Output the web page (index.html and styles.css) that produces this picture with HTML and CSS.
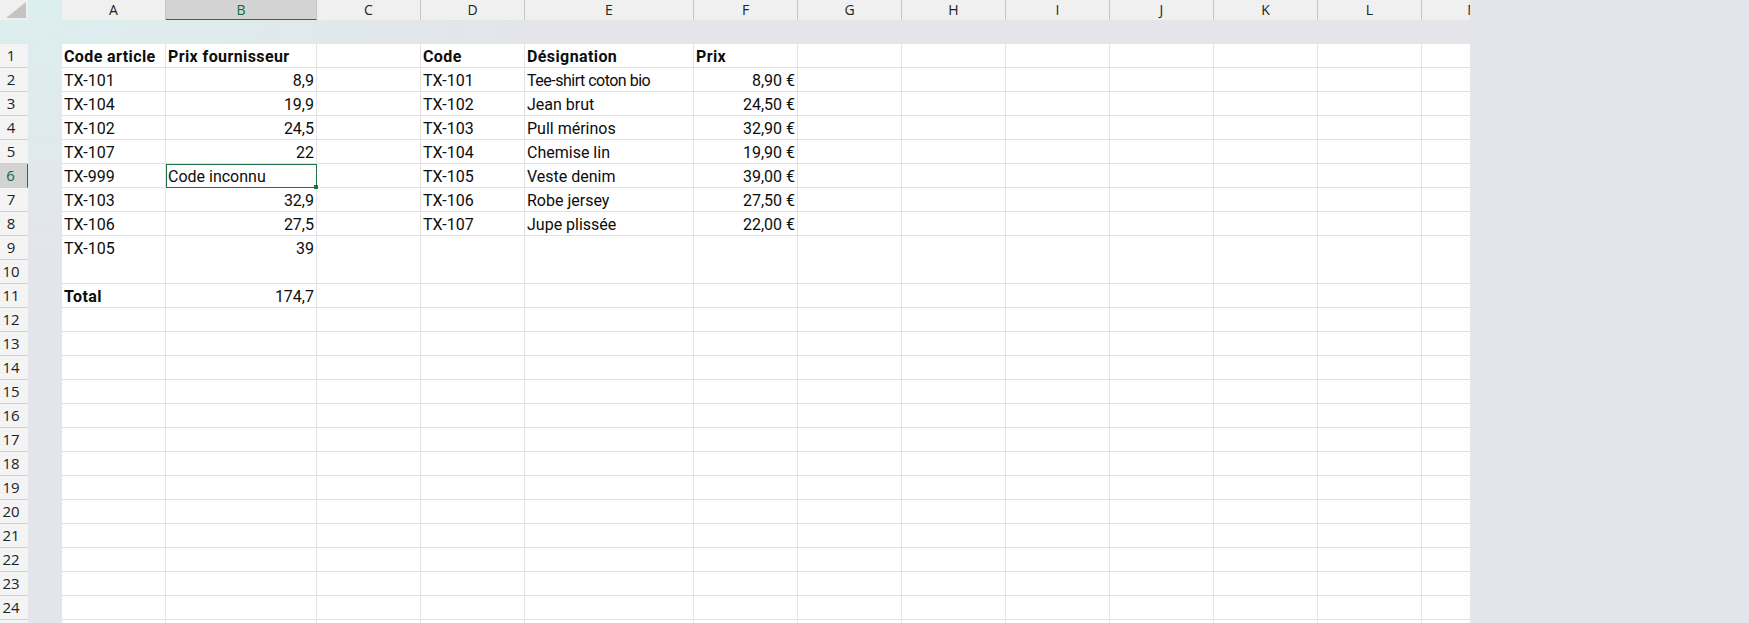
FILE: index.html
```html
<!DOCTYPE html>
<html lang="fr">
<head>
<meta charset="utf-8">
<title>Feuille</title>
<link rel="stylesheet" href="styles.css">
</head>
<body>
<div class="app">
  <div class="corner"><span class="tri"></span></div>
  <div class="colheads">
    <div class="ch w104">A</div>
    <div class="ch w151 sel">B</div>
    <div class="ch w104">C</div>
    <div class="ch w104">D</div>
    <div class="ch w169">E</div>
    <div class="ch w104">F</div>
    <div class="ch w104">G</div>
    <div class="ch w104">H</div>
    <div class="ch w104">I</div>
    <div class="ch w104">J</div>
    <div class="ch w104">K</div>
    <div class="ch w104">L</div>
    <div class="ch w104">M</div>
  </div>
  <div class="rowheads">
    <div class="rh">1</div><div class="rh">2</div><div class="rh">3</div><div class="rh">4</div>
    <div class="rh">5</div><div class="rh sel">6</div><div class="rh">7</div><div class="rh">8</div>
    <div class="rh">9</div><div class="rh">10</div><div class="rh">11</div><div class="rh">12</div>
    <div class="rh">13</div><div class="rh">14</div><div class="rh">15</div><div class="rh">16</div>
    <div class="rh">17</div><div class="rh">18</div><div class="rh">19</div><div class="rh">20</div>
    <div class="rh">21</div><div class="rh">22</div><div class="rh">23</div><div class="rh">24</div>
    <div class="rh"></div>
  </div>
  <div class="sheet">
    <div class="grid" id="grid">
      <!-- row 1 -->
      <div class="c b">Code article</div><div class="c b">Prix fournisseur</div><div class="c"></div><div class="c b">Code</div><div class="c b">Désignation</div><div class="c b">Prix</div><div class="c"></div><div class="c"></div><div class="c"></div><div class="c"></div><div class="c"></div><div class="c"></div><div class="c"></div>
      <!-- row 2 -->
      <div class="c">TX-101</div><div class="c r">8,9</div><div class="c"></div><div class="c">TX-101</div><div class="c tight">Tee-shirt coton bio</div><div class="c r">8,90 €</div><div class="c"></div><div class="c"></div><div class="c"></div><div class="c"></div><div class="c"></div><div class="c"></div><div class="c"></div>
      <!-- row 3 -->
      <div class="c">TX-104</div><div class="c r">19,9</div><div class="c"></div><div class="c">TX-102</div><div class="c">Jean brut</div><div class="c r">24,50 €</div><div class="c"></div><div class="c"></div><div class="c"></div><div class="c"></div><div class="c"></div><div class="c"></div><div class="c"></div>
      <!-- row 4 -->
      <div class="c">TX-102</div><div class="c r">24,5</div><div class="c"></div><div class="c">TX-103</div><div class="c">Pull mérinos</div><div class="c r">32,90 €</div><div class="c"></div><div class="c"></div><div class="c"></div><div class="c"></div><div class="c"></div><div class="c"></div><div class="c"></div>
      <!-- row 5 -->
      <div class="c">TX-107</div><div class="c r">22</div><div class="c"></div><div class="c">TX-104</div><div class="c">Chemise lin</div><div class="c r">19,90 €</div><div class="c"></div><div class="c"></div><div class="c"></div><div class="c"></div><div class="c"></div><div class="c"></div><div class="c"></div>
      <!-- row 6 -->
      <div class="c">TX-999</div><div class="c active">Code inconnu<span class="handle"></span></div><div class="c"></div><div class="c">TX-105</div><div class="c">Veste denim</div><div class="c r">39,00 €</div><div class="c"></div><div class="c"></div><div class="c"></div><div class="c"></div><div class="c"></div><div class="c"></div><div class="c"></div>
      <!-- row 7 -->
      <div class="c">TX-103</div><div class="c r">32,9</div><div class="c"></div><div class="c">TX-106</div><div class="c">Robe jersey</div><div class="c r">27,50 €</div><div class="c"></div><div class="c"></div><div class="c"></div><div class="c"></div><div class="c"></div><div class="c"></div><div class="c"></div>
      <!-- row 8 -->
      <div class="c">TX-106</div><div class="c r">27,5</div><div class="c"></div><div class="c">TX-107</div><div class="c">Jupe plissée</div><div class="c r">22,00 €</div><div class="c"></div><div class="c"></div><div class="c"></div><div class="c"></div><div class="c"></div><div class="c"></div><div class="c"></div>
      <!-- row 9 -->
      <div class="c nb">TX-105</div><div class="c r nb">39</div><div class="c nb"></div><div class="c nb"></div><div class="c nb"></div><div class="c nb"></div><div class="c nb"></div><div class="c nb"></div><div class="c nb"></div><div class="c nb"></div><div class="c nb"></div><div class="c nb"></div><div class="c nb"></div>
      <!-- row 10 -->
      <div class="c"></div><div class="c"></div><div class="c"></div><div class="c"></div><div class="c"></div><div class="c"></div><div class="c"></div><div class="c"></div><div class="c"></div><div class="c"></div><div class="c"></div><div class="c"></div><div class="c"></div>
      <!-- row 11 -->
      <div class="c b">Total</div><div class="c r">174,7</div><div class="c"></div><div class="c"></div><div class="c"></div><div class="c"></div><div class="c"></div><div class="c"></div><div class="c"></div><div class="c"></div><div class="c"></div><div class="c"></div><div class="c"></div>
    </div>
  </div>
</div>
<script>
  // fill empty rows 12-25
  (function () {
    var g = document.getElementById('grid');
    var html = '';
    for (var r = 12; r <= 25; r++) {
      for (var c = 0; c < 13; c++) html += '<div class="c"></div>';
    }
    g.insertAdjacentHTML('beforeend', html);
  })();
</script>
</body>
</html>
```

FILE: styles.css
```css
* { box-sizing: border-box; }

html, body {
  margin: 0;
  padding: 0;
  height: 100%;
  overflow: hidden;
}

body {
  background:
    radial-gradient(ellipse 520px 260px at 0 0, #dcefef 0%, rgba(227,229,234,0) 100%),
    #e3e5ea;
  font-family: "Open Sans", "Liberation Sans", sans-serif;
  color: #111;
}

.app {
  display: grid;
  grid-template-columns: 28px 34px 1408px;
  grid-template-rows: 20px 24px auto;
}

.corner {
  grid-column: 1;
  grid-row: 1;
  background: #f0f0f0;
  position: relative;
}
.corner .tri {
  position: absolute;
  right: 2px;
  bottom: 2px;
  width: 0;
  height: 0;
  border-left: 20px solid transparent;
  border-bottom: 16px solid #c4c4c4;
}

.colheads {
  grid-column: 3;
  grid-row: 1;
  display: flex;
  overflow: hidden;
  background: #f0f0f0;
}
.ch {
  flex: none;
  height: 20px;
  border-right: 1px solid #c6c6c6;
  font-size: 14px;
  line-height: 20px;
  text-align: center;
  color: #222;
}
.ch.sel {
  background: #d3d3d3;
  color: #0f6a3a;
  border-bottom: 1px solid #1b7444;
}
.w104 { width: 104px; }
.w151 { width: 151px; }
.w169 { width: 169px; }

.rowheads {
  grid-column: 1;
  grid-row: 3;
  background: #f4f4f4;
}
.rh {
  height: 24px;
  border-bottom: 1px solid #d0d0d0;
  font-size: 15px;
  line-height: 22px;
  padding-right: 6px;
  text-align: center;
  color: #222;
}
.rh.sel {
  background: #d3d3d3;
  color: #0f6a3a;
  border-right: 1px solid #1b7444;
}

.sheet {
  grid-column: 3;
  grid-row: 3;
  background: #fff;
  overflow: hidden;
  height: 600px;
}
.grid {
  display: grid;
  grid-template-columns: 104px 151px 104px 104px 169px 104px 104px 104px 104px 104px 104px 104px 104px;
  grid-auto-rows: 24px;
  width: 1464px;
}
.c {
  position: relative;
  display: flex;
  align-items: flex-end;
  border-right: 1px solid #e4e4e4;
  border-bottom: 1px solid #e1e1e1;
  padding: 0 2px 0 2px;
  font-family: "Roboto", "Open Sans", sans-serif;
  font-size: 16px;
  line-height: 21px;
  white-space: nowrap;
  overflow: visible;
  color: #0d0d0d;
}
.c.b { font-weight: 700; letter-spacing: 0.4px; }
.c.r { justify-content: flex-end; }
.c.tight { letter-spacing: -0.5px; }
.c.nb { border-bottom-color: transparent; }
.c.active {
  outline: 1px solid #1f7246;
  outline-offset: -1px;
  z-index: 2;
}
.handle {
  position: absolute;
  right: -2px;
  bottom: -2px;
  width: 4px;
  height: 4px;
  background: #1f7246;
}
```
